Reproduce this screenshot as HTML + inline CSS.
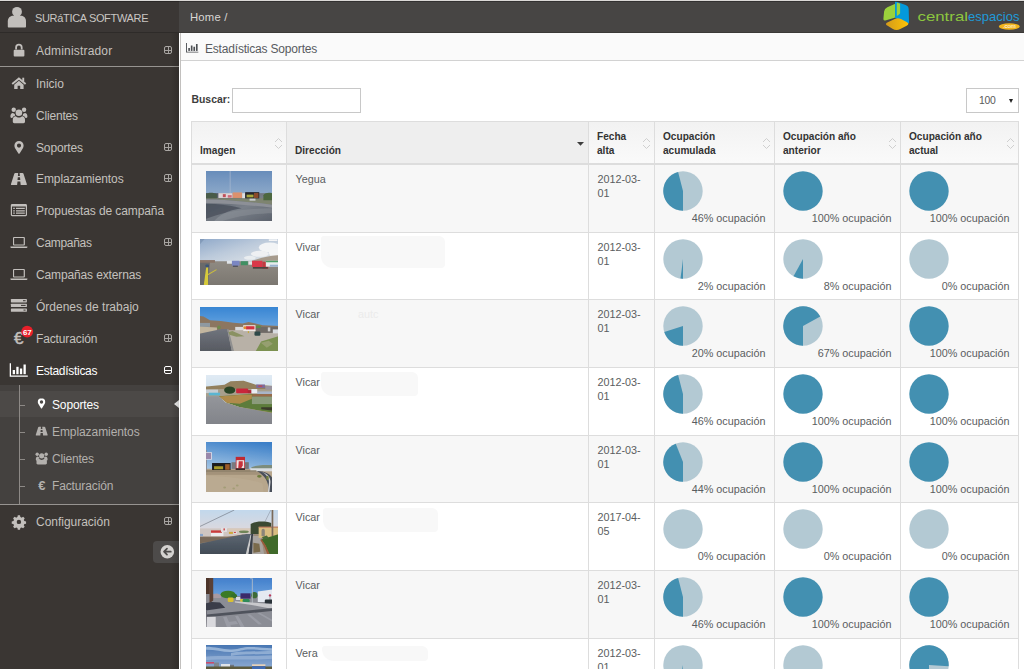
<!DOCTYPE html>
<html lang="es">
<head>
<meta charset="utf-8">
<title>Estadísticas Soportes</title>
<style>
*{box-sizing:border-box;margin:0;padding:0}
html,body{width:1024px;height:669px;overflow:hidden;background:#fff}
body{font-family:"Liberation Sans",sans-serif;font-size:12px;color:#4c4f53;position:relative}
#topline{position:absolute;left:0;top:0;width:1024px;height:1px;background:#dbd9d7;z-index:5}
#topline:after{content:"";position:absolute;left:0;top:1px;width:1024px;height:1px;background:rgba(0,0,0,.28)}
#header{position:absolute;left:0;top:1px;width:1024px;height:32px;background:#474544;border-bottom:1px solid #3b3937}
#brand{position:absolute;left:0;top:1px;width:179px;height:32px;background:#3b3735;border-bottom:1px solid #2e2b29}
#brand span{position:absolute;left:35px;top:10px;font-size:11px;letter-spacing:-.33px;color:#c9c6c3;white-space:nowrap;line-height:14px}
#brand svg{position:absolute;left:8px;top:6px}
#crumb{position:absolute;left:190px;top:10px;font-size:11.300px;letter-spacing:.2px;color:#d8d6d4;white-space:nowrap;line-height:14px}
#logo{position:absolute;left:876px;top:0}
#sidebar{position:absolute;left:0;top:33px;width:179px;height:636px;background:#3a3633}
#sidebar:after{content:"";position:absolute;right:0;top:0;width:8px;height:100%;background:linear-gradient(to right,rgba(0,0,0,0),rgba(0,0,0,.16));pointer-events:none}
.mi{position:absolute;left:0;width:179px;height:32px}
.mi .t{position:absolute;left:36px;top:10px;font-size:12px;color:#c4c1be;white-space:nowrap;line-height:14px}
.mi svg.ic{position:absolute}
.pm{position:absolute;left:164px;top:12px;width:8px;height:8px;border:1px solid #aaa7a4;border-radius:2px}
.pm:before{content:"";position:absolute;left:0;top:2.5px;width:6px;height:1px;background:#a5a29f}
.pm.plus:after{content:"";position:absolute;left:2.5px;top:0;width:1px;height:6px;background:#a5a29f}
.pm.w{border-color:#fff}.pm.w:before{background:#fff}
.hr{position:absolute;left:0;width:179px;height:1px;background:#979491}
#sub{position:absolute;left:0;top:352px;width:179px;height:119px;background:#44413f}
#sub .vl{position:absolute;left:19px;top:0;width:1px;height:119px;background:#8d8986}
#sub .act{position:absolute;left:0;top:6px;width:179px;height:26px;background:#4c4947}
#sub .arr{position:absolute;right:0;top:15px;width:0;height:0;border-top:4.5px solid transparent;border-bottom:4.5px solid transparent;border-right:5px solid #f3f3f3}
.si{position:absolute;left:0;width:179px;height:27px}
.si .t{position:absolute;left:52px;top:6px;font-size:12px;color:#b3b0ad;white-space:nowrap;line-height:14px}
.si.on .t{color:#fff}
.si:before{content:"";position:absolute;left:20px;top:13px;width:5px;height:1px;background:#8d8986}
.si svg{position:absolute}
#mini{position:absolute;left:153px;top:508px;width:26px;height:22px;background:#4d4b4a;border-radius:4px 0 0 4px}
#main{position:absolute;left:180px;top:33px;width:844px;height:636px;background:#fff}
#main:before{content:"";position:absolute;left:0;top:0;width:1px;height:100%;background:#c2c0be;z-index:3}
#ribbon{position:absolute;left:0;top:0;width:844px;height:28px;background:#fafafa;border-bottom:1px solid #d2d2d2}
#ribbon .t{position:absolute;left:25px;top:8.500px;font-size:12px;letter-spacing:-.19px;color:#585b5f;white-space:nowrap;line-height:14px}
#ribbon svg{position:absolute;left:6px;top:10px}
#lbl{position:absolute;left:11.500px;top:60px;font-size:10.400px;font-weight:bold;color:#3d3d3d;line-height:14px}
#inp{position:absolute;left:52px;top:55px;width:129px;height:25px;border:1px solid #c8c8c8;background:#fff}
#sel{position:absolute;left:786px;top:55px;width:53px;height:25px;border:1px solid #c8c8c8;background:#fff;font-size:10.400px;color:#5a5a5a;line-height:23px;padding-left:12px;letter-spacing:-.3px}
#sel:after{content:"";position:absolute;right:5px;top:9.500px;border-left:2.600px solid transparent;border-right:2.600px solid transparent;border-top:4.500px solid #222}
#tbl{position:absolute;left:11px;top:88px;width:828px;height:548px;border-left:1px solid #dddddd;border-top:1px solid #dddddd}
.th{position:absolute;top:0;height:43px;border-right:1px solid #dddddd;border-bottom:2px solid #dddddd;background:linear-gradient(#f2f2f2,#fafafa);font-size:10.100px;font-weight:bold;color:#333;line-height:14px;padding:7.500px 0 0 8px;white-space:nowrap}
.th.sorted{background:#eeeeee}
.th.one{padding-top:21.500px}
.th i{position:absolute;right:4px;top:15px;width:8px;height:11px}
.row{position:absolute;left:0;width:827px;border-bottom:1px solid #dddddd;background:#fff}
.row.odd{background:#f7f7f7}
.c{position:absolute;top:0;height:100%;border-right:1px solid #dddddd}
.c1{left:0;width:95px}.c2{left:95px;width:302px}.c3{left:397px;width:66px}.c4{left:463px;width:120px}.c5{left:583px;width:126px}.c6{left:709px;width:118px}
.c2 span,.c3 span{position:absolute;left:8.500px;top:6.500px;font-size:10.800px;line-height:14.800px;color:#5a5d60}
.c svg.th68{position:absolute;left:13.700px;top:6.300px}
.c svg.th80{position:absolute;left:7.800px;top:6.300px}
.pie{position:absolute;left:8px;top:6px;width:40px;height:40px}
.pl{position:absolute;right:8.500px;top:46px;font-size:10.800px;line-height:14px;color:#5a5d60;white-space:nowrap}
</style>
</head>
<body>
<div id="topline"></div>
<div id="header"></div>
<div id="brand"><span>SURáTICA SOFTWARE</span></div>
<div id="crumb">Home /</div>
<div id="sidebar">
<div class="mi" style="top:1px"><div class="t" style="letter-spacing:0.18px">Administrador</div><i class="pm plus"></i></div>
<div class="mi" style="top:34px"><div class="t" style="letter-spacing:-0.04px">Inicio</div></div>
<div class="mi" style="top:66px"><div class="t" style="letter-spacing:-0.19px">Clientes</div></div>
<div class="mi" style="top:98px"><div class="t" style="letter-spacing:-0.13px">Soportes</div><i class="pm plus"></i></div>
<div class="mi" style="top:129px"><div class="t" style="letter-spacing:-0.08px">Emplazamientos</div><i class="pm plus"></i></div>
<div class="mi" style="top:161px"><div class="t" style="letter-spacing:-0.1px">Propuestas de campaña</div></div>
<div class="mi" style="top:193px"><div class="t" style="letter-spacing:-0.29px">Campañas</div><i class="pm plus"></i></div>
<div class="mi" style="top:225px"><div class="t" style="letter-spacing:-0.13px">Campañas externas</div></div>
<div class="mi" style="top:257px"><div class="t" style="letter-spacing:0px">Órdenes de trabajo</div></div>
<div class="mi" style="top:289px"><div class="t" style="letter-spacing:-0.13px">Facturación</div><i class="pm plus"></i></div>
<div class="mi" style="top:321px"><div class="t" style="letter-spacing:-0.29px;color:#fff">Estadísticas</div><i class="pm w"></i></div>
<div class="mi" style="top:472px"><div class="t" style="letter-spacing:-0.02px">Configuración</div><i class="pm plus"></i></div>
<div class="hr" style="top:33px"></div>
<div id="sub"><div class="act"></div><div class="vl"></div><div class="arr"></div>
<div class="si on" style="top:7px"><div class="t" style="letter-spacing:-0.13px">Soportes</div></div>
<div class="si" style="top:34px"><div class="t" style="letter-spacing:-0.08px">Emplazamientos</div></div>
<div class="si" style="top:61px"><div class="t" style="letter-spacing:-0.19px">Clientes</div></div>
<div class="si" style="top:88px"><div class="t" style="letter-spacing:-0.13px">Facturación</div></div>
</div>
<div class="hr" style="top:471px"></div>
<div id="mini"></div>
</div>
<svg id="icons" width="180" height="669" viewBox="0 0 180 669" style="position:absolute;left:0;top:0;pointer-events:none">
<g fill="#c2bfbc">
<!-- user -->
<circle cx="17" cy="11.8" r="4.9"/>
<path d="M7.8 27.3v-5.2c0-3.3 2.2-5.6 5.2-5.6h8c3 0 5 2.3 5 5.6v5.2c0 .6-.5 1-1 1H8.8c-.6 0-1-.4-1-1z" transform="translate(0,-.7)"/>
<!-- lock -->
<rect x="13.700" y="49.700" width="10.700" height="6.700" rx="1"/>
<path d="M15.2 49.6v-2.1a3.7 3.7 0 0 1 7.4 0v2.1h-1.8v-2.1a1.9 1.9 0 0 0-3.8 0v2.1z"/>
<!-- home -->
<path d="M12.200 84.100L18.900 78.500L25.600 84.100" fill="none" stroke="#c2bfbc" stroke-width="1.900"/>
<rect x="22.300" y="77.700" width="1.900" height="4"/>
<path d="M14.200 84.700l4.700-3.900 4.700 3.900v4.400h-3.400v-3.300h-2.600v3.300h-3.400z"/>
<!-- users -->
<circle cx="18.900" cy="112.700" r="3.300"/>
<path d="M14.300 123.200c-.9 0-1.500-.6-1.500-1.400v-2.300c0-2 1.200-3.300 2.900-3.300c.9.800 2 1.300 3.200 1.300s2.300-.5 3.200-1.300c1.700 0 2.900 1.300 2.900 3.300v2.300c0 .8-.6 1.400-1.500 1.400z"/>
<circle cx="13.700" cy="109.700" r="2.200"/><circle cx="24.100" cy="109.700" r="2.200"/>
<path d="M10.400 116.600c0-2.300.9-3.600 2.500-3.600c.6.500 1.300.8 2 .9c-.1.700 0 1.300.3 1.900c-1.500.2-2.500 1-2.900 2.200h-.7c-.8 0-1.200-.5-1.200-1.400z"/>
<path d="M27.400 116.600c0-2.300-.9-3.600-2.500-3.600c-.6.500-1.300.8-2 .9c.1.700 0 1.300-.3 1.900c1.500.2 2.500 1 2.900 2.200h.7c.8 0 1.200-.5 1.200-1.400z"/>
<!-- map marker -->
<path fill-rule="evenodd" d="M19 141a4.600 4.600 0 0 0-4.600 4.600c0 1 .3 1.800.7 2.600l3.300 5.200c.3.500.9.500 1.200 0l3.300-5.200c.4-.8.700-1.600.7-2.600A4.600 4.600 0 0 0 19 141zm0 2.500a2.100 2.100 0 1 1 0 4.200a2.100 2.100 0 0 1 0-4.200z"/>
<!-- road -->
<path fill-rule="evenodd" d="M15.300 173h2.900l-.3 3h2l-.3-3h2.900c.5 0 .8.300 1 .8l3.300 10.200c.2.600-.1 1-.7 1h-5.400l-.4-3.600h-2.800l-.4 3.600h-5.400c-.6 0-.9-.4-.7-1l3.300-10.200c.2-.5.500-.8 1-.8zm2.500 4.300l-.3 2.800h2.800l-.3-2.800z"/>
<!-- list-alt -->
<path fill-rule="evenodd" d="M12.200 204h13.400c.8 0 1.400.6 1.400 1.400v9.400c0 .8-.6 1.400-1.400 1.400H12.200c-.8 0-1.400-.6-1.400-1.400v-9.400c0-.8.600-1.400 1.400-1.400zm-.2 2.600v8.100c0 .3.200.4.400.4h13c.3 0 .4-.2.400-.4v-8.100z"/>
<path d="M13.200 207.800h1.600v1.200h-1.600zM13.200 210.200h1.600v1.200h-1.600zM13.200 212.600h1.600v1.200h-1.600zM16 207.800h8.800v1.200H16zM16 210.200h8.800v1.200H16zM16 212.600h8.800v1.200H16z"/>
<!-- laptop 1 --><g transform="translate(0 .9)">
<path fill-rule="evenodd" d="M14.200 236h9.500c.7 0 1.200.5 1.200 1.200v6.300c0 .7-.5 1.200-1.200 1.200h-9.500c-.7 0-1.200-.5-1.200-1.200v-6.300c0-.7.500-1.200 1.200-1.200zm.2 1.200c-.2 0-.3.100-.3.300v5.800c0 .2.100.3.300.3h9c.2 0 .3-.1.300-.3v-5.800c0-.2-.1-.3-.3-.3z"/>
<path d="M10.400 245.600h17v.5c0 .7-.6 1.100-1.300 1.100H11.700c-.7 0-1.300-.4-1.300-1.100z"/>
<!-- laptop 2 -->
<path fill-rule="evenodd" d="M14.200 268h9.500c.7 0 1.200.5 1.200 1.200v6.300c0 .7-.5 1.200-1.200 1.200h-9.500c-.7 0-1.200-.5-1.200-1.200v-6.300c0-.7.500-1.200 1.200-1.200zm.2 1.200c-.2 0-.3.100-.3.300v5.800c0 .2.100.3.300.3h9c.2 0 .3-.1.300-.3v-5.800c0-.2-.1-.3-.3-.3z"/>
<path d="M10.400 277.600h17v.5c0 .7-.6 1.100-1.300 1.100H11.700c-.7 0-1.300-.4-1.300-1.100z"/></g>
<!-- server -->
<rect x="10.900" y="299" width="16" height="3.400" rx=".6"/><rect x="10.900" y="303.700" width="16" height="3.400" rx=".6"/><rect x="10.900" y="308.400" width="16" height="3.400" rx=".6"/>
<!-- gear -->
<path transform="translate(18.900 521.900) scale(.92) translate(-18.900 -521.900)" fill-rule="evenodd" d="M17.700 514.800h2.400l.4 1.900c.5.100.9.300 1.300.6l1.700-1 1.700 1.700-1 1.700c.3.400.5.800.6 1.300l1.900.4v2.400l-1.900.4c-.1.500-.3.900-.6 1.300l1 1.700-1.700 1.700-1.700-1c-.4.300-.8.500-1.300.6l-.4 1.900h-2.400l-.4-1.900c-.5-.1-.9-.3-1.300-.6l-1.700 1-1.700-1.700 1-1.700c-.3-.4-.5-.8-.6-1.300l-1.900-.4v-2.400l1.900-.4c.1-.5.300-.9.600-1.300l-1-1.700 1.700-1.700 1.700 1c.4-.3.800-.5 1.300-.6zm1.200 4.700a2.400 2.400 0 1 0 0 4.800a2.400 2.400 0 0 0 0-4.800z"/>
</g>
<g fill="#3a3633"><rect x="23" y="300.200" width="2.600" height="1" /><rect x="21" y="304.900" width="4.600" height="1"/><rect x="23.500" y="309.600" width="2.100" height="1"/></g>
<!-- euro -->
<text x="13.900" y="343.600" font-family="Liberation Sans, sans-serif" font-size="17" fill="#c2bfbc" stroke="#c2bfbc" stroke-width=".5">€</text>
<circle cx="27.200" cy="331.600" r="5.900" fill="#e8202a"/>
<text x="27.200" y="334.500" text-anchor="middle" font-family="Liberation Sans, sans-serif" font-size="8" font-weight="bold" fill="#fff" letter-spacing="-.3">67</text>
<!-- bar chart (white) -->
<g fill="#fff">
<path d="M9.700 363.200h1.300v12.200h16.800v1.300H9.700z"/>
<rect x="12.700" y="370" width="2.300" height="4.200"/><rect x="16.300" y="366.800" width="2.300" height="7.400"/><rect x="19.900" y="368.500" width="2.300" height="5.700"/><rect x="23.500" y="364.500" width="2.300" height="9.700"/>
</g>
<!-- submenu icons -->
<path fill="#fff" fill-rule="evenodd" d="M41.500 398.300a3.700 3.700 0 0 0-3.700 3.700c0 .8.200 1.400.6 2.100l2.600 4.200c.3.400.7.400 1 0l2.600-4.200c.4-.7.600-1.300.6-2.100a3.700 3.700 0 0 0-3.700-3.700zm0 2a1.700 1.700 0 1 1 0 3.400a1.700 1.700 0 0 1 0-3.400z"/>
<g fill="#b3b0ad">
<path fill-rule="evenodd" d="M38.800 426.700h2.200l-.2 2.300h1.600l-.2-2.300h2.200c.4 0 .6.200.8.600l2.400 7.500c.2.500-.1.800-.5.800h-4l-.3-2.700h-2.200l-.3 2.700h-4c-.4 0-.7-.3-.5-.8l2.400-7.500c.2-.4.400-.6.800-.6zm1.900 3.300l-.2 2.100h2.200l-.2-2.100z"/>
<circle cx="41.700" cy="455.800" r="2.600"/>
<path d="M37.800 464.500c-.8 0-1.300-.5-1.300-1.200v-1.800c0-1.600 1-2.700 2.400-2.700c.8.700 1.700 1.100 2.800 1.100s2-.4 2.800-1.100c1.400 0 2.400 1.100 2.400 2.700v1.800c0 .7-.5 1.200-1.300 1.200z"/>
<circle cx="37.200" cy="454.200" r="1.700"/><circle cx="46.200" cy="454.200" r="1.700"/>
<path d="M35.800 459.600c0-1.900.8-3 2-3c.5.400 1 .7 1.600.8c-.1.400-.1.800.1 1.200c-1.200.200-2 .9-2.300 2.100h-.5c-.6 0-.9-.4-.9-1.100z"/>
<path d="M47.600 459.600c0-1.900-.8-3-2-3c-.5.400-1 .7-1.600.8c.1.400.1.800-.1 1.200c1.200.200 2 .9 2.300 2.100h.5c.6 0 .9-.4.900-1.100z"/>
</g>
<text x="38.300" y="490.300" font-family="Liberation Sans, sans-serif" font-size="13" font-weight="bold" fill="#b3b0ad">€</text>
<!-- collapse arrow -->
<circle cx="167.300" cy="551.700" r="6.800" fill="#d4d2d0"/>
<path d="M170.800 551.700h-6.600m2.800-3l-3 3l3 3" fill="none" stroke="#4d4b4a" stroke-width="1.700" stroke-linecap="round" stroke-linejoin="round"/>
</svg>

<svg id="logo" width="148" height="33" viewBox="0 0 148 33">
<defs><linearGradient id="lg1" x1="0" y1="0" x2="1" y2="0"><stop offset="0" stop-color="#d49b1a"/><stop offset="1" stop-color="#fcc307"/></linearGradient></defs>
<path d="M19.00 4.10Q19.00 3.80 18.72 3.92L11.34 7.13Q8.40 8.40 8.10 11.59L7.41 18.81Q7.20 21.00 9.31 20.39L18.71 17.68Q19.00 17.60 19.00 17.30Z" fill="#9bd23c"/>
<path d="M19.00 2.00Q19.00 1.20 19.75 1.47L29.58 4.93Q32.60 6.00 32.69 9.20L33.07 22.40Q33.10 23.60 31.99 23.14L19.28 17.91Q19.00 17.80 19.00 17.50Z" fill="#0399dc"/>
<path d="M20.80 3.20Q20.80 2.60 21.37 2.79L23.53 3.51Q24.10 3.70 24.10 4.30L24.10 13.10Q24.10 13.70 23.61 14.04L21.29 15.66Q20.80 16.00 20.80 15.40Z" fill="#9bd23c"/>
<path d="M18.72 18.96Q21.90 17.50 25.02 19.10L30.64 21.98Q34.20 23.80 30.65 25.64L24.30 28.93Q20.30 31.00 16.43 28.70L11.64 25.85Q8.20 23.80 11.83 22.13Z" fill="url(#lg1)"/>
<text x="41.500" y="21" font-family="Liberation Sans, sans-serif" font-size="13.500" fill="#8cc63f" textLength="50.500" lengthAdjust="spacingAndGlyphs">central</text>
<text x="92" y="21" font-family="Liberation Sans, sans-serif" font-size="13.500" fill="#1f9ad7" textLength="51.500" lengthAdjust="spacingAndGlyphs">espacios</text>
<ellipse cx="133.300" cy="26.500" rx="10.500" ry="3.200" fill="#f2b51c"/>
<text x="133.300" y="28.300" text-anchor="middle" font-family="Liberation Sans, sans-serif" font-size="6" fill="#fff">.com</text>
</svg>

<div id="main">
<div id="ribbon"><svg width="12.800" height="10" viewBox="0 0 14 12" preserveAspectRatio="none"><g fill="#4c4f53"><path d="M0 0h1v10.500h12.500v1H0z"/><rect x="2.500" y="6" width="1.800" height="3.500"/><rect x="5.300" y="3" width="1.800" height="6.500"/><rect x="8.100" y="4.500" width="1.800" height="5"/><rect x="10.900" y="1.200" width="1.800" height="8.300"/></g></svg><div class="t">Estadísticas Soportes</div></div>
<div id="lbl">Buscar:</div><div id="inp"></div><div id="sel">100</div>
<div id="tbl">
<div class="th one" style="left:0px;width:95px">Imagen<i><svg width="9" height="13" viewBox="0 0 9 13"><path d="M1 5l3.500-3.500L8 5M1 8l3.500 3.500L8 8" fill="none" stroke="#cfcfcf" stroke-width="1"/></svg></i></div>
<div class="th one sorted" style="left:95px;width:302px">Dirección<i style="top:14.500px;right:4.500px"><svg width="9" height="6" viewBox="0 0 9 6"><path d="M1 1h7L4.500 4.800z" fill="#3d3d3d"/></svg></i></div>
<div class="th " style="left:397px;width:66px">Fecha<br>alta<i><svg width="9" height="13" viewBox="0 0 9 13"><path d="M1 5l3.500-3.500L8 5M1 8l3.500 3.500L8 8" fill="none" stroke="#cfcfcf" stroke-width="1"/></svg></i></div>
<div class="th " style="left:463px;width:120px">Ocupación<br>acumulada<i><svg width="9" height="13" viewBox="0 0 9 13"><path d="M1 5l3.500-3.500L8 5M1 8l3.500 3.500L8 8" fill="none" stroke="#cfcfcf" stroke-width="1"/></svg></i></div>
<div class="th " style="left:583px;width:126px">Ocupación año<br>anterior<i><svg width="9" height="13" viewBox="0 0 9 13"><path d="M1 5l3.500-3.500L8 5M1 8l3.500 3.500L8 8" fill="none" stroke="#cfcfcf" stroke-width="1"/></svg></i></div>
<div class="th " style="left:709px;width:118px">Ocupación año<br>actual<i><svg width="9" height="13" viewBox="0 0 9 13"><path d="M1 5l3.500-3.500L8 5M1 8l3.500 3.500L8 8" fill="none" stroke="#cfcfcf" stroke-width="1"/></svg></i></div>
<div class="row odd" style="top:43px;height:68px">
<div class="c c1"><svg style="left:14.0px;top:6.3px" class="th68" width="66.3" height="49.3" viewBox="0 0 67 49" preserveAspectRatio="none"><defs><filter id="b1" x="-10%" y="-10%" width="120%" height="120%"><feGaussianBlur stdDeviation="0.55"/></filter>
<linearGradient id="s1" x1="0" y1="0" x2="0" y2="1"><stop offset="0" stop-color="#6288b8"/><stop offset="1" stop-color="#8eaaca"/></linearGradient>
<linearGradient id="r1" x1="0" y1="0" x2="1" y2="1"><stop offset="0" stop-color="#4a525e"/><stop offset=".5" stop-color="#7a8089"/><stop offset="1" stop-color="#555b66"/></linearGradient></defs><g filter="url(#b1)">
<rect x="-4" y="-4" width="75" height="28" fill="url(#s1)"/>
<rect x="-4" y="22" width="75" height="32" fill="url(#r1)"/>
<path d="M-4 27h75v7c-25-3-50-6-75-6z" fill="#7e846f"/>
<path d="M-4 28c25 0 50 3 75 6v3c-25-3-50-5-75-5z" fill="#8d9097"/>
<path d="M-4 33c20-1 30 2 40 4 -15 2-25 8-30 16h-10z" fill="#4a515c" opacity=".8"/>
<path d="M-4 49c20-8 40-12 75-12v5c-30 0-50 5-65 12z" fill="#8a8f97" opacity=".55"/>
<rect x="24" y="0" width=".7" height="22" fill="#a9b9cf"/>
<path d="M-1 23c3-2 9-2 12 0v4H-1z" fill="#4a5c48"/>
<path d="M58 24c2-3 8-3 10-1v6H58z" fill="#4d6840"/>
<rect x="12.500" y="22" width="14.500" height="4.800" fill="#ded6d8"/><rect x="17" y="23" width="3" height="3" fill="#c0505a"/><rect x="22" y="24" width="4" height="2.500" fill="#d06a7a"/>
<rect x="27" y="21.300" width="9.500" height="5.500" fill="#dc916d"/>
<rect x="36.500" y="22" width="3" height="5" fill="#dfe0e2"/>
<rect x="39.600" y="21" width="14.200" height="6.200" fill="#26262c"/><rect x="41" y="23.500" width="7" height="2.700" fill="#a8a83a"/><rect x="48.500" y="21.800" width="4.500" height="5" fill="#8a4a2a"/>
<rect x="44" y="27.500" width="6" height="2" fill="#c9ccd0"/>
</g></svg></div><div class="c c2"><span>Yegua</span></div><div class="c c3"><span>2012-03-<br>01</span></div>
<div class="c c4"><svg class="pie" viewBox="0 0 40 40"><circle cx="20" cy="20" r="19.7" fill="#b3c9d3"/><path d="M20 20L20 39.7A19.7 19.7 0 0 1 15.10 0.92Z" fill="#4390b1"/></svg><div class="pl">46% ocupación</div></div>
<div class="c c5"><svg class="pie" viewBox="0 0 40 40"><circle cx="20" cy="20" r="19.700" fill="#4390b1"/></svg><div class="pl">100% ocupación</div></div>
<div class="c c6"><svg class="pie" viewBox="0 0 40 40"><circle cx="20" cy="20" r="19.700" fill="#4390b1"/></svg><div class="pl">100% ocupación</div></div>
</div>
<div class="row" style="top:111px;height:67px">
<div class="c c1"><svg style="left:8.2px;top:6.2px" class="th80" width="77.8" height="45.5" viewBox="0 0 78 46" preserveAspectRatio="none"><defs><filter id="b2" x="-10%" y="-10%" width="120%" height="120%"><feGaussianBlur stdDeviation="0.55"/></filter>
<linearGradient id="s2" x1="0" y1="0" x2=".9" y2="1"><stop offset="0" stop-color="#86a2c6"/><stop offset=".5" stop-color="#bccadb"/><stop offset="1" stop-color="#e3e7ea"/></linearGradient>
<linearGradient id="r2" x1="0" y1="0" x2="0" y2="1"><stop offset="0" stop-color="#8f8a82"/><stop offset="1" stop-color="#78746e"/></linearGradient></defs><g filter="url(#b2)">
<rect x="-4" y="-4" width="86" height="29" fill="url(#s2)"/>
<ellipse cx="70" cy="8.500" rx="11" ry="5" fill="#f2f4f6"/><ellipse cx="60" cy="15" rx="9" ry="3" fill="#eef0f3"/><ellipse cx="75" cy="14" rx="6" ry="4" fill="#f4f5f6"/><ellipse cx="50" cy="19" rx="6" ry="2" fill="#e9edf0"/>
<path d="M52 22l10-3 10-2 10-1v7H52z" fill="#a69b8d"/>
<rect x="-4" y="22.500" width="86" height="28" fill="url(#r2)"/>
<path d="M-4 22.500h14l-2 28h-12z" fill="#6a6a6b"/>
<rect x="-1" y="21.300" width="16" height="2.700" fill="#8a7468"/>
<rect x="5.500" y="25.800" width="3.500" height="2.800" rx=".8" fill="#3c5777"/>
<path d="M6.200 28.700h1.900l0 20h-4.600z" fill="#d6ca3a"/><path d="M8 35.500l8.300-5 .5.900-8.800 5.300z" fill="#cdbf3c"/>
<rect x="27" y="22" width="6" height="3" fill="#dfe3e6"/>
<rect x="32" y="22" width="7.600" height="5" fill="#7a86c2"/><rect x="33" y="27" width="5" height="1" fill="#3a3f55"/>
<rect x="41" y="22.500" width="7" height="4" fill="#3f9064"/>
<rect x="48.500" y="22.500" width="4" height="3.500" fill="#e1e4e4"/>
<rect x="52.200" y="22" width="10.400" height="6.300" fill="#da3849"/><path d="M62.600 23h4.400l1.500 2.500v4.500h-5.900z" fill="#c23a40"/>
<rect x="53" y="28.300" width="15" height="1.700" fill="#4a4440"/>
<rect x="66" y="22" width="16" height="6" fill="#e8ecec"/><rect x="66" y="22" width="16" height="1.500" fill="#4fa06a"/><rect x="70" y="26" width="12" height="2" fill="#9ab4d0"/>
<rect x="69" y=".3" width="8.500" height="1.700" fill="#f4f5f6"/>
<path d="M-4 -4h12l-12 14z" fill="#6f87a8" opacity=".5"/>
</g></svg></div><div class="c c2"><span>Vivar</span><b style="position:absolute;left:34.0px;top:2.5px;width:124.0px;height:32.5px;background:#f8f8f8;border-radius:3px 6px 4px 12px"></b></div><div class="c c3"><span>2012-03-<br>01</span></div>
<div class="c c4"><svg class="pie" viewBox="0 0 40 40"><circle cx="20" cy="20" r="19.7" fill="#b3c9d3"/><path d="M20 20L20 39.7A19.7 19.7 0 0 1 17.53 39.54Z" fill="#4390b1"/></svg><div class="pl">2% ocupación</div></div>
<div class="c c5"><svg class="pie" viewBox="0 0 40 40"><circle cx="20" cy="20" r="19.7" fill="#b3c9d3"/><path d="M20 20L20 39.7A19.7 19.7 0 0 1 10.51 37.26Z" fill="#4390b1"/></svg><div class="pl">8% ocupación</div></div>
<div class="c c6"><svg class="pie" viewBox="0 0 40 40"><circle cx="20" cy="20" r="19.700" fill="#b3c9d3"/></svg><div class="pl">0% ocupación</div></div>
</div>
<div class="row odd" style="top:178px;height:68px">
<div class="c c1"><svg style="left:8.2px;top:6.9px" class="th80" width="77.8" height="43.8" viewBox="0 0 78 44" preserveAspectRatio="none"><defs><filter id="b3" x="-10%" y="-10%" width="120%" height="120%"><feGaussianBlur stdDeviation="0.55"/></filter>
<linearGradient id="s3" x1="0" y1="0" x2="0" y2="1"><stop offset="0" stop-color="#2f7fd0"/><stop offset="1" stop-color="#6aa7e2"/></linearGradient>
<linearGradient id="r3" x1="0" y1="0" x2="0" y2="1"><stop offset="0" stop-color="#70747d"/><stop offset="1" stop-color="#53565d"/></linearGradient></defs><g filter="url(#b3)">
<rect x="-4" y="-4" width="86" height="26" fill="url(#s3)"/>
<rect x="-4" y="20" width="86" height="28" fill="#b8b1a7"/>
<path d="M-4 8.500l7.500 1 6.500 3.800 11 .7 12.600 1.800 9.200.8 5.900-1.600 5.900 1.200 8.400 2.100 19 1v4H-4z" fill="#8c7661"/>
<path d="M-4 16h14v4H-4z" fill="#8f99a1"/><path d="M-4 19.500l21 1v6.500l-21 2z" fill="#c3b69f"/>
<circle cx="19" cy="20.500" r="1.800" fill="#6f8a4c"/>
<path d="M-4 27.600l25.800-5.600h5.500l5.500 26H-4z" fill="url(#r3)"/>
<path d="M27.300 22l1.200 0 6.500 26h-2.500z" fill="#8f8f8f"/>
<path d="M28.500 25l4-1 12 5.500-8 .5-7-2z" fill="#8a9162"/>
<rect x="35.300" y="20" width="8" height="3.500" fill="#dadada"/>
<rect x="55.900" y="20" width="26" height="6" fill="#6e6965"/><rect x="56" y="18.500" width="5" height="2.500" rx="1" fill="#5a8a4a"/>
<rect x="43.300" y="18.300" width="12.300" height="5.900" fill="#eee8e6"/><rect x="46" y="19.300" width="8.600" height="3.200" fill="#d3303f"/><circle cx="45" cy="20.800" r="1.500" fill="#e08a2a"/>
<rect x="48" y="24.200" width="1" height="2" fill="#c9a92a"/>
<rect x="54.600" y="24.600" width="6" height="4.200" rx="1.200" fill="#2e4a48"/>
<rect x="73" y="22.500" width="6" height="4" fill="#d9dce0"/><rect x="68" y="20.500" width="2.500" height="4" fill="#d0d0d0"/>
<path d="M53.800 48l7.500-13.300 20.700-6.500v20z" fill="#7b9151"/>
<path d="M61 36l8-2 4 3-6 4z" fill="#a8a884" opacity=".6"/>
</g></svg></div><div class="c c2"><span>Vicar</span><em style="position:absolute;left:71px;top:6.500px;font-style:normal;font-size:10.800px;line-height:14.800px;color:#ebebeb">autc</em></div><div class="c c3"><span>2012-03-<br>01</span></div>
<div class="c c4"><svg class="pie" viewBox="0 0 40 40"><circle cx="20" cy="20" r="19.7" fill="#b3c9d3"/><path d="M20 20L20 39.7A19.7 19.7 0 0 1 1.26 26.09Z" fill="#4390b1"/></svg><div class="pl">20% ocupación</div></div>
<div class="c c5"><svg class="pie" viewBox="0 0 40 40"><circle cx="20" cy="20" r="19.7" fill="#b3c9d3"/><path d="M20 20L20 39.7A19.7 19.7 0 1 1 37.26 10.51Z" fill="#4390b1"/></svg><div class="pl">67% ocupación</div></div>
<div class="c c6"><svg class="pie" viewBox="0 0 40 40"><circle cx="20" cy="20" r="19.700" fill="#4390b1"/></svg><div class="pl">100% ocupación</div></div>
</div>
<div class="row" style="top:246px;height:68px">
<div class="c c1"><svg style="left:13.9px;top:6.5px" class="th68" width="66.3" height="49.3" viewBox="0 0 66 49" preserveAspectRatio="none"><defs><filter id="b4" x="-10%" y="-10%" width="120%" height="120%"><feGaussianBlur stdDeviation="0.55"/></filter>
<linearGradient id="s4" x1="0" y1="0" x2="0" y2="1"><stop offset="0" stop-color="#e4edf5"/><stop offset="1" stop-color="#cfe0ee"/></linearGradient>
<linearGradient id="r4" x1="0" y1="0" x2="0" y2="1"><stop offset="0" stop-color="#94969b"/><stop offset="1" stop-color="#7f8187"/></linearGradient></defs><g filter="url(#b4)">
<rect x="-4" y="-4" width="75" height="22" fill="url(#s4)"/>
<path d="M-4 12l22.400-2.200 6-3.500 13-.6 8.600 2.800 3.600 1.300 21 1.200v8H-4z" fill="#93805d"/>
<rect x="-4" y="14" width="75" height="8" fill="#a89f8c"/>
<rect x="-4" y="14.500" width="16" height="3.500" fill="#c5ccd2"/>
<rect x="2.800" y="17.600" width="11.200" height="2.700" fill="#5ab5d2"/>
<rect x="50" y="9.400" width="8.700" height="3.400" fill="#7d6c9c"/><rect x="52" y="10.300" width="4" height="1.500" fill="#b84a5a"/>
<rect x="59" y="11" width="8" height="3.500" fill="#9a94a0"/>
<rect x="51" y="16.300" width="20" height="2.700" fill="#a9b5c9"/>
<ellipse cx="23.600" cy="15" rx="5.600" ry="3.600" fill="#2a4528"/>
<rect x="30" y="13.300" width="12" height="4.900" rx="1" fill="#c9283b"/><rect x="41.500" y="15" width="4" height="3.200" fill="#b02535"/>
<rect x="45.200" y="14" width="5.800" height="4.200" fill="#e9edf3"/>
<path d="M12.700 21l33-2 25 .5v20l-37-7.500-13-4.500z" fill="#5d7b3b"/>
<path d="M12.700 21.300l20-1.500 13-.3v4l-12 5-13-1z" fill="#b08b4b"/>
<rect x="46" y="19" width="25" height="2.600" fill="#9a6a4b"/>
<rect x="45.700" y="21.500" width="25" height="7.400" fill="#8b9b7b"/>
<path d="M55 32h16v4l-16-2z" fill="#3b3b2b"/>
<path d="M20 27.300l13 4.600 37.500 6v2.500l-37-6-13-4.500z" fill="#a69858"/>
<path d="M-4 21.500l16.700-.5 7.300 6.600 13 4.300 38 6.600v15H-4z" fill="url(#r4)"/>
</g></svg></div><div class="c c2"><span>Vicar</span><b style="position:absolute;left:34.0px;top:4.0px;width:96.5px;height:24.0px;background:#f8f8f8;border-radius:3px 6px 4px 12px"></b></div><div class="c c3"><span>2012-03-<br>01</span></div>
<div class="c c4"><svg class="pie" viewBox="0 0 40 40"><circle cx="20" cy="20" r="19.7" fill="#b3c9d3"/><path d="M20 20L20 39.7A19.7 19.7 0 0 1 15.10 0.92Z" fill="#4390b1"/></svg><div class="pl">46% ocupación</div></div>
<div class="c c5"><svg class="pie" viewBox="0 0 40 40"><circle cx="20" cy="20" r="19.700" fill="#4390b1"/></svg><div class="pl">100% ocupación</div></div>
<div class="c c6"><svg class="pie" viewBox="0 0 40 40"><circle cx="20" cy="20" r="19.700" fill="#4390b1"/></svg><div class="pl">100% ocupación</div></div>
</div>
<div class="row odd" style="top:314px;height:67px">
<div class="c c1"><svg style="left:13.9px;top:6.2px" class="th68" width="66.5" height="49.5" viewBox="0 0 66 49" preserveAspectRatio="none"><defs><filter id="b5" x="-10%" y="-10%" width="120%" height="120%"><feGaussianBlur stdDeviation="0.55"/></filter>
<linearGradient id="s5" x1=".3" y1="0" x2="0" y2="1"><stop offset="0" stop-color="#3b7fc8"/><stop offset="1" stop-color="#abcae6"/></linearGradient></defs><g filter="url(#b5)">
<rect x="-4" y="-4" width="75" height="32" fill="url(#s5)"/>
<rect x="-4" y="26.500" width="75" height="28" fill="#b7a68c"/>
<rect x="-4" y="27.500" width="58" height="5" fill="#a3927a"/>
<rect x="44" y="25.500" width="27" height="3.500" fill="#d9dde1"/>
<path d="M45 25c6-2.500 14-2.500 26-2v3H45z" fill="#7c8c7c"/>
<rect x="0" y="8" width=".9" height="22" fill="#8a8a92"/>
<rect x="-1" y="10.100" width="6.800" height="7.400" fill="#e4e0e8"/><rect x="0" y="10.800" width="5" height="6" fill="#9a88aa"/>
<rect x="6" y="20.800" width="18.400" height="6.900" fill="#1d1d1f"/><rect x="8" y="24" width="9" height="3" fill="#a79a2b"/><rect x="19" y="22" width="4.500" height="5.500" fill="#9b5a2b"/>
<rect x="25.300" y="20" width="4.300" height="6.600" fill="#7a7a7d"/>
<rect x="38.700" y="20" width="3.800" height="6.600" fill="#747477"/>
<rect x="29.500" y="14.700" width="9.200" height="12.800" fill="#c12a33"/><rect x="30.300" y="18" width="7.600" height="8" fill="#ece4e2"/><path d="M32.500 19h4v4l-1.500 3h-3z" fill="#c7303a"/><rect x="29.500" y="26" width="9.200" height="1.700" fill="#3a2a2c"/>
<rect x="-4" y="28" width="54" height="1.500" fill="#8e806a"/>
<path d="M50.400 28.600c8 0 14 3 16 8l5 0v17h-10c2-10 0-19-11-25z" fill="#4a505a"/>
<path d="M55 29.500c6 1.500 9 6 9 10l-1.500 14h-1.500l1.500-14c0-4-3-8-7.500-10z" fill="#d6d6d8"/>
<ellipse cx="53" cy="34" rx="2.300" ry="1.400" fill="#6f7d3e"/><ellipse cx="61" cy="35.500" rx="1.300" ry="2.200" fill="#6f7d3e"/>
<ellipse cx="31" cy="43" rx="1.400" ry="1" fill="#7d844a"/><ellipse cx="18.500" cy="45" rx="1.400" ry="1" fill="#7d844a"/><ellipse cx="27.500" cy="46" rx="1.300" ry=".9" fill="#7d844a"/>
<path d="M-4 33c25 1 45 3 60 8l2 13h-62z" fill="#bdad94" opacity=".6"/>
</g></svg></div><div class="c c2"><span>Vicar</span></div><div class="c c3"><span>2012-03-<br>01</span></div>
<div class="c c4"><svg class="pie" viewBox="0 0 40 40"><circle cx="20" cy="20" r="19.7" fill="#b3c9d3"/><path d="M20 20L20 39.7A19.7 19.7 0 0 1 12.75 1.68Z" fill="#4390b1"/></svg><div class="pl">44% ocupación</div></div>
<div class="c c5"><svg class="pie" viewBox="0 0 40 40"><circle cx="20" cy="20" r="19.700" fill="#4390b1"/></svg><div class="pl">100% ocupación</div></div>
<div class="c c6"><svg class="pie" viewBox="0 0 40 40"><circle cx="20" cy="20" r="19.700" fill="#4390b1"/></svg><div class="pl">100% ocupación</div></div>
</div>
<div class="row" style="top:381px;height:68px">
<div class="c c1"><svg style="left:8.2px;top:7.0px" class="th80" width="77.8" height="43.8" viewBox="0 0 78 44" preserveAspectRatio="none"><defs><filter id="b6" x="-10%" y="-10%" width="120%" height="120%"><feGaussianBlur stdDeviation="0.55"/></filter>
<linearGradient id="s6" x1="0" y1="0" x2="0" y2="1"><stop offset="0" stop-color="#bdd8ef"/><stop offset="1" stop-color="#ded8dc"/></linearGradient>
<linearGradient id="r6" x1="0" y1="0" x2="0" y2="1"><stop offset="0" stop-color="#5c6672"/><stop offset="1" stop-color="#3e4751"/></linearGradient></defs><g filter="url(#b6)">
<rect x="-4" y="-4" width="86" height="26" fill="url(#s6)"/>
<rect x="-4" y="19.500" width="86" height="30" fill="#9b8b79"/>
<rect x="-4" y="18.500" width="58" height="8" fill="#cfc6c2"/>
<rect x="28" y="18.500" width="23" height="3" fill="#d9c9b9"/>
<rect x="11" y="21.500" width="12.500" height="4.700" fill="#ebebed"/><rect x="11" y="20.500" width="11" height="2.400" fill="#c93b3b"/><rect x="21" y="18" width="6" height="4" fill="#e3dfe2"/><rect x="23.500" y="18.500" width="1.500" height="2" fill="#c94a4a"/>
<rect x="29" y="22" width="4" height="2" fill="#d0a83a"/><rect x="33.500" y="21.500" width="3.500" height="2.500" fill="#e6d9d9"/><rect x="34" y="22" width="2" height="1" fill="#c23a3a"/>
<ellipse cx="44" cy="21.800" rx="5" ry="1.300" fill="#6f8558"/>
<rect x="-4" y="24" width="7" height="2.300" fill="#8aa4c8"/>
<path d="M-4 27l30 .5 20-3.500-15 5-35 5z" fill="#7a6a5a"/>
<path d="M0 16.500L34.400 0" stroke="#5f6570" stroke-width=".55" fill="none"/><path d="M64 14L71 0" stroke="#6f7580" stroke-width=".4" fill="none"/>
<path d="M-4 34.500l50.200-10.400h5.500l1.300 24H-4z" fill="url(#r6)"/>
<path d="M50.600 25l1.400 0-4.200 23h-2.800z" fill="#cacaca"/>
<path d="M51.500 24h2l0 24h-5z" fill="#3a3f48"/>
<path d="M53 26h8l4 22H52z" fill="#a9a4a0"/><path d="M53.500 33l6 1 1 8-7 1z" fill="#7a6a4c"/>
<path d="M50.800 14c5-3 14-3 20.600-1v11H50.800z" fill="#3a4a30"/>
<rect x="58.800" y="17" width="23" height="11" fill="#d9bd81"/><rect x="58.800" y="16.700" width="23" height="1" fill="#b8705a"/>
<path d="M61.700 26.200v-5.600a1.650 1.650 0 0 1 3.300 0v5.600z" fill="#8b8579"/>
<rect x="71.800" y="-2" width="1.700" height="28.200" fill="#7a6a5a"/>
<path d="M61.300 29.600l20-6v26h-10l-5.800-14.200z" fill="#3f6a2a"/>
<path d="M60.300 30l1.500-.5 4 6 6 13h-2.500l-5-12z" fill="#9a5a3a"/>
<path d="M62 27l5-1.500 2 3-5 1.500z" fill="#4a6a38"/>
</g></svg></div><div class="c c2"><span>Vicar</span><b style="position:absolute;left:35.5px;top:5.0px;width:115.0px;height:23.5px;background:#f8f8f8;border-radius:3px 6px 4px 12px"></b></div><div class="c c3"><span>2017-04-<br>05</span></div>
<div class="c c4"><svg class="pie" viewBox="0 0 40 40"><circle cx="20" cy="20" r="19.700" fill="#b3c9d3"/></svg><div class="pl">0% ocupación</div></div>
<div class="c c5"><svg class="pie" viewBox="0 0 40 40"><circle cx="20" cy="20" r="19.700" fill="#b3c9d3"/></svg><div class="pl">0% ocupación</div></div>
<div class="c c6"><svg class="pie" viewBox="0 0 40 40"><circle cx="20" cy="20" r="19.700" fill="#b3c9d3"/></svg><div class="pl">0% ocupación</div></div>
</div>
<div class="row odd" style="top:449px;height:68px">
<div class="c c1"><svg style="left:13.9px;top:6.6px" class="th68" width="66.5" height="49.3" viewBox="0 0 66.4 49.3" preserveAspectRatio="none"><defs><filter id="b7" x="-10%" y="-10%" width="120%" height="120%"><feGaussianBlur stdDeviation="0.55"/></filter>
<linearGradient id="s7" x1="0" y1="0" x2="0" y2="1"><stop offset="0" stop-color="#3a78c8"/><stop offset="1" stop-color="#6da3de"/></linearGradient></defs><g filter="url(#b7)">
<rect x="-4" y="-4" width="75" height="24" fill="url(#s7)"/>
<rect x="-4" y="18" width="75" height="36" fill="#8b8d95"/>
<path d="M7 16l4-.5 4 1.500v3H7z" fill="#a89aa2"/>
<path d="M51.700 13.500l19-2.500v13H51.700z" fill="#e5e9f1"/>
<ellipse cx="22" cy="16.500" rx="7.500" ry="3.800" fill="#3a7a28"/><ellipse cx="28" cy="18" rx="3" ry="2.200" fill="#35702a"/>
<ellipse cx="48.300" cy="17.200" rx="3.200" ry="3.100" fill="#3c6a34"/>
<rect x="30" y="19" width="4.500" height="3" fill="#d9dde5"/>
<rect x="34.400" y="15.300" width="10.100" height="5.300" fill="#3b2b6b"/>
<rect x="45.800" y=".7" width=".8" height="26.400" fill="#b9c1c9"/><rect x="44" y=".5" width="2.500" height=".6" fill="#b9c1c9"/>
<circle cx="63.900" cy="17.400" r="1.200" fill="#b83a5a"/><rect x="63.600" y="18.500" width=".6" height="10" fill="#7a7a82"/>
<rect x="21.700" y="19.600" width="5.800" height="4.300" rx="1.200" fill="#d9c131"/>
<rect x="34.100" y="21" width="3.500" height="3" rx=".8" fill="#d4c43a"/><rect x="36.600" y="21" width="6.900" height="3.500" rx="1.200" fill="#2f8b59"/>
<rect x="58.700" y="21.500" width="8" height="3.900" rx="1.200" fill="#2b3139"/>
<path d="M28.800 23.200l41 3.300v5.200l-24-4.600-17-2.600z" fill="#c9c9cd"/>
<path d="M-4 -4h10l1.200 4 0 22.400-4 3H-4z" fill="#5a4034"/><path d="M-4 16h7.500l0 16h-7.500z" fill="#8a8a91"/><path d="M-4 -4h7v20h-7z" fill="#4d352c"/>
<path d="M5.400 24.100l8.600.4 5.200 5.200-23 3.300v-7z" fill="#3a3c48"/>
<path d="M-4 37l74.400-7.300v2.800L-4 39.800z" fill="#50525c"/>
<path d="M-4 38.800h13.700v14H-4z" fill="#d9d9dd"/><path d="M-1 33l2 0-.5 16h-1.500z" fill="#6a6a72"/>
<path d="M17 39l3.500-.4 5 11h-4.500zM29 38l3 -.3 7 12h-4zM41 36.500l3-.3 12 10-3.500.3zM51 35l3-.3 14 8v2zM22 44l8-1 2 3-8 1z" fill="#a9abb5" opacity=".5"/>
</g></svg></div><div class="c c2"><span>Vicar</span></div><div class="c c3"><span>2012-03-<br>01</span></div>
<div class="c c4"><svg class="pie" viewBox="0 0 40 40"><circle cx="20" cy="20" r="19.7" fill="#b3c9d3"/><path d="M20 20L20 39.7A19.7 19.7 0 0 1 15.10 0.92Z" fill="#4390b1"/></svg><div class="pl">46% ocupación</div></div>
<div class="c c5"><svg class="pie" viewBox="0 0 40 40"><circle cx="20" cy="20" r="19.700" fill="#4390b1"/></svg><div class="pl">100% ocupación</div></div>
<div class="c c6"><svg class="pie" viewBox="0 0 40 40"><circle cx="20" cy="20" r="19.700" fill="#4390b1"/></svg><div class="pl">100% ocupación</div></div>
</div>
<div class="row" style="top:517px;height:68px">
<div class="c c1"><svg style="left:13.9px;top:6.2px" class="th68" width="66.4" height="30" viewBox="0 0 66.4 30" preserveAspectRatio="none"><defs><filter id="b8" x="-10%" y="-10%" width="120%" height="120%"><feGaussianBlur stdDeviation="0.55"/></filter>
<linearGradient id="s8" x1="0" y1="0" x2="0" y2="1"><stop offset="0" stop-color="#3d6eae"/><stop offset=".7" stop-color="#8eabd2"/><stop offset="1" stop-color="#aebfda"/></linearGradient></defs><g filter="url(#b8)">
<rect x="-4" y="-4" width="75" height="40" fill="url(#s8)"/>
<path d="M-4 2c12-1 20 3 30 2.500 8-.5 10-2.500 18-2.500 10 0 18 2 27 1v2.500c-9 1-17-1-27-1-8 0-10 2-18 2.500C16 7.500 8 4 -4 5z" fill="#aec6e2" opacity=".75"/>
<path d="M25 8c10-2 25-1 46-2.500v3c-21 1-36 0-46 2.500z" fill="#a3bcdc" opacity=".7"/>
<path d="M-4 12c20-2 40 0 75-2v3.500c-35 2-55 0-75 2z" fill="#9db6d8" opacity=".7"/>
<rect x="-1" y="17" width="9" height="1.600" fill="#c94b6b"/>
<rect x="8" y="17.500" width="5" height="5" fill="#7f8791"/><rect x="15" y="19" width="9" height="3.500" fill="#dfe3e8"/><rect x="24" y="19.800" width="4" height="3" fill="#6e7680"/>
<rect x="46" y="19.300" width="13.400" height="2.200" fill="#e8d2b8"/><rect x="46" y="21.300" width="13.400" height="3" fill="#3f6ab2"/>
<rect x="-4" y="21.500" width="75" height="12" fill="#5d5a3c"/>
<rect x="46" y="21.300" width="13.400" height="3" fill="#3f6ab2"/>
</g></svg></div><div class="c c2"><span>Vera</span><b style="position:absolute;left:35.0px;top:6.5px;width:106.0px;height:15.0px;background:#f8f8f8;border-radius:3px 6px 4px 12px"></b></div><div class="c c3"><span>2012-03-<br>01</span></div>
<div class="c c4"><svg class="pie" viewBox="0 0 40 40"><circle cx="20" cy="20" r="19.7" fill="#b3c9d3"/><path d="M20 20L20 39.7A19.7 19.7 0 0 1 16.31 39.35Z" fill="#4390b1"/></svg><div class="pl">3% ocupación</div></div>
<div class="c c5"><svg class="pie" viewBox="0 0 40 40"><circle cx="20" cy="20" r="19.700" fill="#b3c9d3"/></svg><div class="pl">0% ocupación</div></div>
<div class="c c6"><svg class="pie" viewBox="0 0 40 40"><circle cx="20" cy="20" r="19.7" fill="#b3c9d3"/><path d="M20 20L20 39.7A19.7 19.7 0 1 1 39.66 21.24Z" fill="#4390b1"/></svg><div class="pl">76% ocupación</div></div>
</div>
</div></div>
</body>
</html>
